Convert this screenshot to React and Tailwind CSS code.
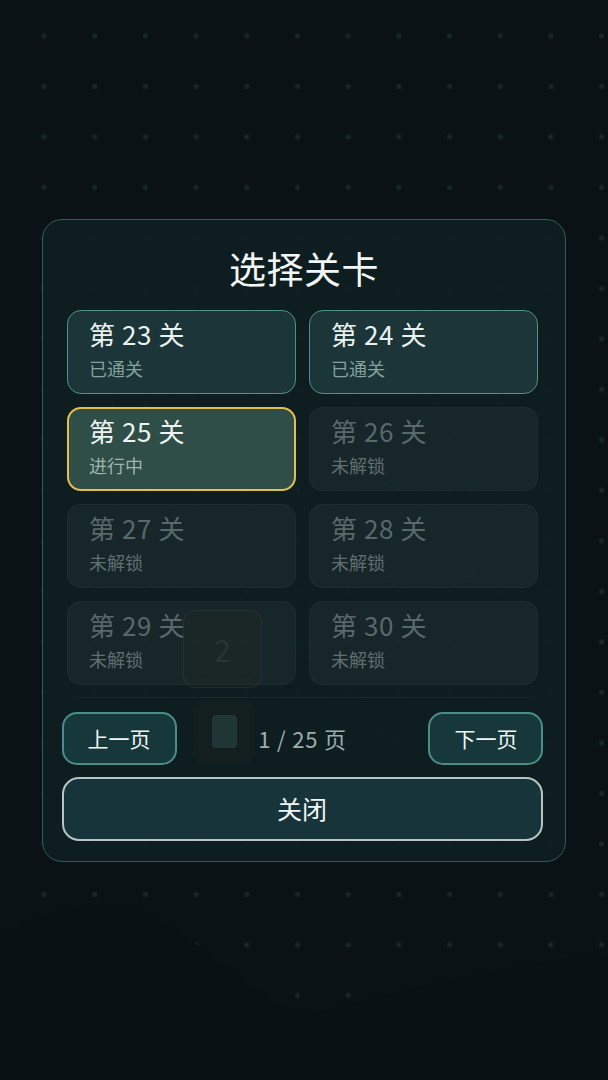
import React from 'react';

const board = [
  ['', '', '', '', ''],
  ['4', '', '', '', ''],
  ['8', '', '+2', '-6', '+2'],
  ['', '', '-9', '0', '-9'],
  ['', '', '+2', '5', '-4'],
  ['', '', '+8', '+1', ''],
];

const levels = [
  { n: 23, state: 'done' },
  { n: 24, state: 'done' },
  { n: 25, state: 'current' },
  { n: 26, state: 'locked' },
  { n: 27, state: 'locked' },
  { n: 28, state: 'locked' },
  { n: 29, state: 'locked' },
  { n: 30, state: 'locked' },
];

const LevelCard = ({ n, state }) => {
  if (state === 'current') {
    return (
      <div className="h-[84px] rounded-[14px] border-2 border-[#e2c04c] bg-[#2e4e47] pl-5 pt-[6px]">
        <p className="text-[26px] leading-[32px] tracking-[0.6px] text-[#eef4f1]">第 {n} 关</p>
        <p className="mt-[7px] text-[18px] leading-[22px] text-[#9db3ab]">进行中</p>
      </div>
    );
  }
  if (state === 'done') {
    return (
      <div className="h-[84px] rounded-[14px] border-[1.5px] border-[#4c9287] bg-[#1c3538] pl-[21px] pt-[6.5px]">
        <p className="text-[26px] leading-[32px] tracking-[0.6px] text-[#eaf2ef]">第 {n} 关</p>
        <p className="mt-[7px] text-[18px] leading-[22px] text-[#86a19e]">已通关</p>
      </div>
    );
  }
  return (
    <div className="h-[84px] rounded-[14px] border-[1.5px] border-white/[0.03] bg-[#1a292c]/80 pl-[21px] pt-[6.5px]">
      <p className="text-[26px] leading-[32px] tracking-[0.6px] text-[#58696a]">第 {n} 关</p>
      <p className="mt-[7px] text-[18px] leading-[22px] text-[#5f6f70]">未解锁</p>
    </div>
  );
};

export default function App() {
  return (
    <div className="relative h-[1080px] w-[608px] overflow-hidden bg-[#0a1215] font-['Noto_Sans_CJK_SC','Noto_Sans',sans-serif]">
      {/* dotted backdrop */}
      <div className="absolute inset-0 bg-[radial-gradient(circle,rgba(32,54,56,0.75)_0px,rgba(32,54,56,0.45)_2px,transparent_3.5px)] bg-[length:50.7px_50.5px] bg-[position:18.7px_10.7px]" />
      <svg className="absolute left-0 top-[880px]" width="608" height="200" viewBox="0 0 608 200">
        <path d="M0 55 C40 35 80 20 120 25 C180 35 240 110 300 135 C380 120 480 85 608 75 L608 200 L0 200 Z" fill="#091114" />
      </svg>

      {/* game board behind the dialog */}
      <div className="absolute left-[112px] top-[293px] grid grid-cols-5 gap-x-[19px] gap-y-[18px]">
        {board.flat().map((t, i) => (
          <div
            key={i}
            className="flex h-[63px] w-[62px] items-center justify-center rounded-[10px] border border-white/[0.05] text-[24px] text-white/[0.07]"
          >
            {t}
          </div>
        ))}
      </div>

      {/* dialog */}
      <div className="absolute left-[42px] top-[219px] h-[643px] w-[524px] rounded-[20px] border-[1.5px] border-[#2d605b] bg-[#0f1e21]/[0.93] pt-[24px]">
        <h1 className="text-center text-[37px] leading-[48px] tracking-[0.5px] text-[#f2f6f5]">选择关卡</h1>

        <div className="mt-[18px] ml-[24px] grid w-[471px] grid-cols-2 gap-x-[13px] gap-y-[13px]">
          {levels.map((l) => (
            <LevelCard key={l.n} {...l} />
          ))}
        </div>

        <div className="mx-[32px] mt-[12px] h-px bg-white/[0.05]" />

        <div className="mt-[14px] flex items-center justify-between pl-[18.5px] pr-[21.5px]">
          <button className="h-[53px] w-[115px] rounded-[15px] border-2 border-[#4b8d87] bg-[#17383b] text-[21px] text-[#f0f5f4]">
            上一页
          </button>
          <span className="text-[22px] tracking-[0.8px] text-[#9aaeac]">1 / 25 页</span>
          <button className="h-[53px] w-[115px] rounded-[15px] border-2 border-[#4b8d87] bg-[#17383b] text-[21px] text-[#f0f5f4]">
            下一页
          </button>
        </div>

        <button className="ml-[18.5px] mt-[12px] h-[64px] w-[481px] rounded-[17px] border-2 border-[#b7c4c3] bg-[#17343a] text-[25px] text-[#f2f6f5]">
          关闭
        </button>
      </div>

      {/* highlighted tiles that show over the dialog */}
      <div className="absolute left-[183px] top-[610px] flex h-[78px] w-[79px] items-center justify-center rounded-[12px] border border-white/[0.05] bg-[#3a2e1a]/[0.12] text-[30px] text-white/[0.06]">
        2
      </div>
      <div className="absolute left-[193px] top-[700px] flex h-[63px] w-[62px] items-center justify-center rounded-[10px] bg-[#3a2e1a]/[0.12]">
        <div className="h-[33px] w-[25px] rounded-[4px] bg-[#2a4446]/60" />
      </div>
    </div>
  );
}
